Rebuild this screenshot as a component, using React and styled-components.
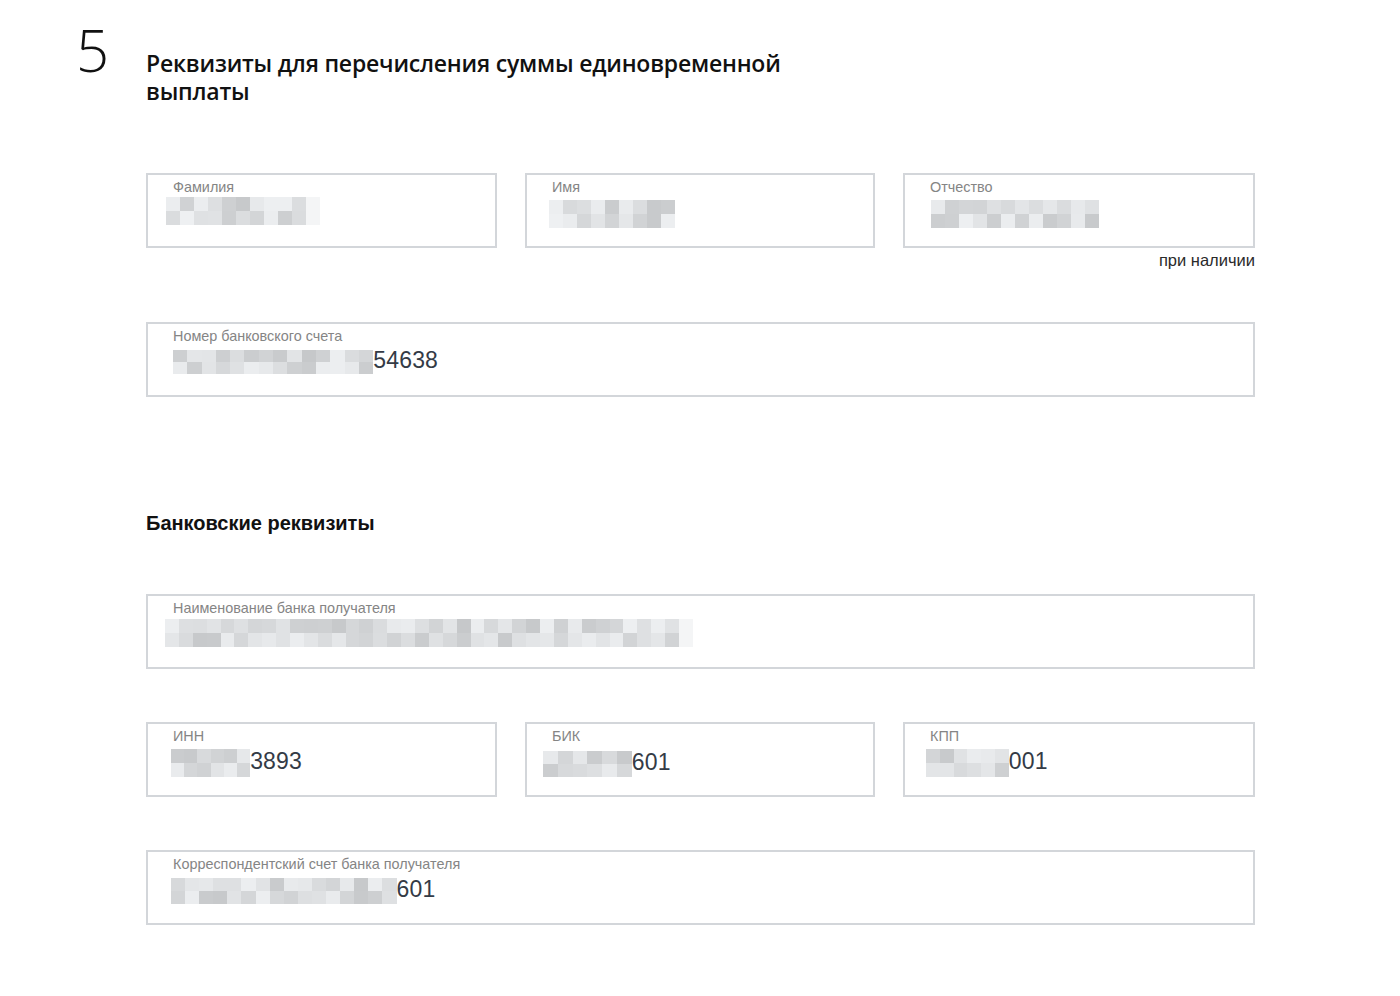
import styled, { createGlobalStyle } from "styled-components";

const GlobalStyle = createGlobalStyle`
    html, body {
        margin: 0;
        padding: 0;
        background: #ffffff;
    }
    body {
        font-family: "Liberation Sans", Arial, sans-serif;
        color: #1a1a1a;
    }
`;

const Page = styled.div`
    width: 1400px;
    min-height: 996px;
    box-sizing: border-box;
    padding: 14px 0 40px 0;
`;

const Header = styled.div`
    display: flex;
    align-items: flex-start;
`;

const StepNumber = styled.div`
    width: 66px;
    margin-left: 76px;
    font-family: "Open Sans", sans-serif;
    font-weight: 300;
    font-size: 58px;
    line-height: 72px;
    color: #111;
`;

const Heading = styled.h1`
    margin: 35px 0 0 4px;
    width: 700px;
    font-family: "Open Sans", sans-serif;
    font-weight: 600;
    font-size: 23px;
    line-height: 28px;
    letter-spacing: -0.2px;
    color: #111;
`;

const Content = styled.div`
    margin-left: 146px;
    width: 1109px;
    display: flex;
    flex-direction: column;
`;

const Row = styled.div`
    display: grid;
    grid-template-columns: ${(p) => (p.cols === 3 ? "351px 350px 352px" : "1fr")};
    column-gap: 28px;
    margin-top: ${(p) => p.top}px;
`;

const Field = styled.div`
    height: 75px;
    box-sizing: border-box;
    border: 2px solid #d3d6da;
    padding: 3px 20px 0 25px;
`;

const Label = styled.div`
    font-size: 14.4px;
    line-height: 18px;
    color: #858585;
    white-space: nowrap;
`;

const ValueRow = styled.div`
    display: flex;
    align-items: center;
    margin-top: ${(p) => p.dy}px;
    margin-left: ${(p) => p.dx}px;
    height: 27px;
`;

const Mosaic = styled.div`
    display: grid;
    grid-template-columns: repeat(${(p) => p.cols}, ${(p) => p.cell}px);
    grid-auto-rows: ${(p) => p.rowH}px;
    filter: blur(0.5px);
`;

const Cell = styled.div`
    background: ${(p) => p.shade};
`;

const Value = styled.span`
    font-size: 23px;
    line-height: 27px;
    margin-top: -3px;
    color: #343b46;
    letter-spacing: 0.2px;
`;

const Note = styled.div`
    text-align: right;
    margin-top: 3px;
    font-size: 16.5px;
    line-height: 18px;
    color: #2a2a2a;
`;

const SectionTitle = styled.h2`
    margin: 114px 0 0 0;
    font-size: 20px;
    line-height: 24px;
    font-weight: 700;
    color: #111;
`;

function shadeFor(seed, i) {
    let x = Math.sin(seed * 97.13 + i * 12.9898) * 43758.5453;
    x = x - Math.floor(x);
    const v = Math.round(198 + x * 40);
    return `rgb(${v}, ${v + 2}, ${v + 4})`;
}

function Blur({ cols, cell = 14, rowH = 13, seed = 1, fade }) {
    const cells = [];
    for (let i = 0; i < cols * 2; i++) {
        const last = fade && i % cols === cols - 1;
        cells.push(<Cell key={i} shade={last ? "#f4f5f6" : shadeFor(seed, i)} />);
    }
    return (
        <Mosaic cols={cols} cell={cell} rowH={rowH}>
            {cells}
        </Mosaic>
    );
}

function InputBox({ label, blur, value, dx = 0, dy = 4 }) {
    return (
        <Field>
            <Label>{label}</Label>
            <ValueRow dx={dx} dy={dy}>
                <Blur {...blur} />
                {value && <Value>{value}</Value>}
            </ValueRow>
        </Field>
    );
}

export default function App() {
    return (
        <>
            <GlobalStyle />
            <Page>
                <Header>
                    <StepNumber>5</StepNumber>
                    <Heading>Реквизиты для перечисления суммы единовременной выплаты</Heading>
                </Header>
                <Content>
                    <Row cols={3} top={68}>
                        <InputBox label="Фамилия" dx={-7} dy={1} blur={{ cols: 11, cell: 14, rowH: 14, seed: 1, fade: true }} />
                        <InputBox label="Имя" dx={-3} dy={4} blur={{ cols: 9, cell: 14, rowH: 14, seed: 2 }} />
                        <InputBox label="Отчество" dx={1} dy={4} blur={{ cols: 12, cell: 14, rowH: 14, seed: 3 }} />
                    </Row>
                    <Note>при наличии</Note>
                    <Row top={53}>
                        <InputBox label="Номер банковского счета" dx={0} dy={3} blur={{ cols: 14, cell: 14.3, rowH: 12, seed: 4 }} value="54638" />
                    </Row>
                    <SectionTitle>Банковские реквизиты</SectionTitle>
                    <Row top={59}>
                        <InputBox label="Наименование банка получателя" dx={-8} dy={2} blur={{ cols: 38, cell: 13.9, rowH: 14, seed: 5, fade: true }} />
                    </Row>
                    <Row cols={3} top={53}>
                        <InputBox label="ИНН" dx={-2} dy={4} blur={{ cols: 6, cell: 13.2, rowH: 14, seed: 6 }} value="3893" />
                        <InputBox label="БИК" dx={-9} dy={5} blur={{ cols: 6, cell: 14.8, rowH: 13, seed: 7 }} value="601" />
                        <InputBox label="КПП" dx={-4} dy={4} blur={{ cols: 6, cell: 13.8, rowH: 14, seed: 8 }} value="001" />
                    </Row>
                    <Row top={53}>
                        <InputBox label="Корреспондентский счет банка получателя" dx={-2} dy={4} blur={{ cols: 16, cell: 14.1, rowH: 13, seed: 9 }} value="601" />
                    </Row>
                </Content>
            </Page>
        </>
    );
}
